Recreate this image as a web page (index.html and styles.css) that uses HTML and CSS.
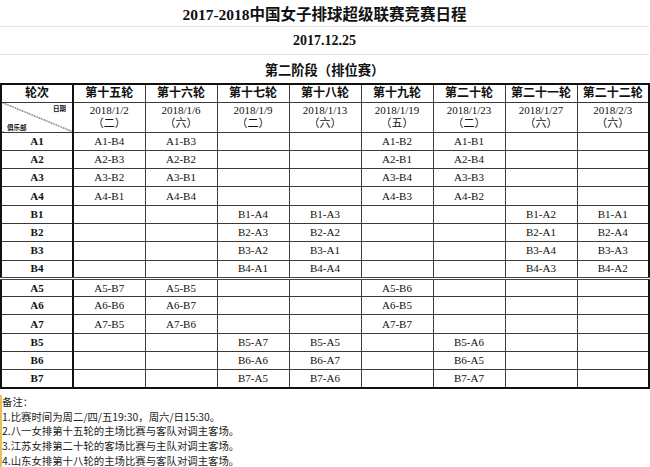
FILE: index.html
```html
<!DOCTYPE html>
<html lang="zh-CN">
<head>
<meta charset="utf-8">
<title>2017-2018中国女子排球超级联赛竞赛日程</title>
<link rel="stylesheet" href="styles.css">
</head>
<body>
<div class="page">
  <div class="band title">2017-2018中国女子排球超级联赛竞赛日程</div>
  <div class="band date">2017.12.25</div>
  <div class="band stage">第二阶段（排位赛）</div>
  <table class="sched">
    <colgroup>
      <col class="c0"><col class="c"><col class="c"><col class="c"><col class="c"><col class="c"><col class="c"><col class="c"><col class="c">
    </colgroup>
    <tr class="hrow">
      <th class="lab">轮次</th><th>第十五轮</th><th>第十六轮</th><th>第十七轮</th><th>第十八轮</th><th>第十九轮</th><th>第二十轮</th><th>第二十一轮</th><th>第二十二轮</th>
    </tr>
    <tr class="drow">
      <td class="lab diag"><div class="diagin"><span class="dt">日期</span><span class="db">俱乐部</span></div></td>
      <td>2018/1/2<br><span class="wd">（二）</span></td>
      <td>2018/1/6<br><span class="wd">（六）</span></td>
      <td>2018/1/9<br><span class="wd">（二）</span></td>
      <td>2018/1/13<br><span class="wd">（六）</span></td>
      <td>2018/1/19<br><span class="wd">（五）</span></td>
      <td>2018/1/23<br><span class="wd">（二）</span></td>
      <td>2018/1/27<br><span class="wd">（六）</span></td>
      <td>2018/2/3<br><span class="wd">（六）</span></td>
    </tr>
    <tr><td class="lab">A1</td><td>A1-B4</td><td>A1-B3</td><td></td><td></td><td>A1-B2</td><td>A1-B1</td><td></td><td></td></tr>
    <tr><td class="lab">A2</td><td>A2-B3</td><td>A2-B2</td><td></td><td></td><td>A2-B1</td><td>A2-B4</td><td></td><td></td></tr>
    <tr><td class="lab">A3</td><td>A3-B2</td><td>A3-B1</td><td></td><td></td><td>A3-B4</td><td>A3-B3</td><td></td><td></td></tr>
    <tr><td class="lab">A4</td><td>A4-B1</td><td>A4-B4</td><td></td><td></td><td>A4-B3</td><td>A4-B2</td><td></td><td></td></tr>
    <tr><td class="lab">B1</td><td></td><td></td><td>B1-A4</td><td>B1-A3</td><td></td><td></td><td>B1-A2</td><td>B1-A1</td></tr>
    <tr><td class="lab">B2</td><td></td><td></td><td>B2-A3</td><td>B2-A2</td><td></td><td></td><td>B2-A1</td><td>B2-A4</td></tr>
    <tr><td class="lab">B3</td><td></td><td></td><td>B3-A2</td><td>B3-A1</td><td></td><td></td><td>B3-A4</td><td>B3-A3</td></tr>
    <tr><td class="lab">B4</td><td></td><td></td><td>B4-A1</td><td>B4-A4</td><td></td><td></td><td>B4-A3</td><td>B4-A2</td></tr>
    <tr class="split"><td class="lab">A5</td><td>A5-B7</td><td>A5-B5</td><td></td><td></td><td>A5-B6</td><td></td><td></td><td></td></tr>
    <tr><td class="lab">A6</td><td>A6-B6</td><td>A6-B7</td><td></td><td></td><td>A6-B5</td><td></td><td></td><td></td></tr>
    <tr><td class="lab">A7</td><td>A7-B5</td><td>A7-B6</td><td></td><td></td><td>A7-B7</td><td></td><td></td><td></td></tr>
    <tr><td class="lab">B5</td><td></td><td></td><td>B5-A7</td><td>B5-A5</td><td></td><td>B5-A6</td><td></td><td></td></tr>
    <tr><td class="lab">B6</td><td></td><td></td><td>B6-A6</td><td>B6-A7</td><td></td><td>B6-A5</td><td></td><td></td></tr>
    <tr><td class="lab">B7</td><td></td><td></td><td>B7-A5</td><td>B7-A6</td><td></td><td>B7-A7</td><td></td><td></td></tr>
  </table>
  <div class="notes">
    <div>备注：</div>
    <div>1.比赛时间为周二/四/五19:30，周六/日15:30。</div>
    <div>2.八一女排第十五轮的主场比赛与客队对调主客场。</div>
    <div>3.江苏女排第二十轮的客场比赛与主队对调主客场。</div>
    <div>4.山东女排第十八轮的主场比赛与客队对调主客场。</div>
  </div>
</div>
</body>
</html>
```

FILE: styles.css
```css
html, body {
  margin: 0;
  padding: 0;
  background: #ffffff;
}
.page {
  width: 650px;
  height: 467px;
  overflow: hidden;
  font-family: "Liberation Serif", "Noto Sans CJK SC", serif;
  color: #111;
}
.band {
  display: flex;
  align-items: center;
  justify-content: center;
  font-weight: bold;
  border-bottom: 1px solid #e4e4e4;
  width: 649px;
  box-sizing: border-box;
}
.title {
  height: 27px;
  font-size: 15.5px;
}
.date {
  height: 28px;
  font-size: 14px;
}
.stage {
  height: 28px;
  font-size: 13.3px;
  border-bottom: none;
}
.sched {
  border-collapse: collapse;
  table-layout: fixed;
  width: 649px;
  border: 2px solid #111;
}
.c0 { width: 72px; }
.c { width: 72px; }
.sched th, .sched td {
  padding: 0;
  text-align: center;
  vertical-align: middle;
  border: 1px solid #3a3a3a;
  font-size: 11px;
  line-height: 13px;
  overflow: hidden;
  white-space: nowrap;
}
.sched th {
  font-weight: bold;
  font-size: 12px;
}
.sched .lab {
  border-right: 2px solid #111;
  font-weight: bold;
}
.sched tr { height: 18.3px; }
.sched .hrow { height: 18px; }
.sched .drow { height: 29.5px; }
.sched .drow td { line-height: 13.5px; }
.wd { font-size: 11px; }
.sched .split td { border-top: 3px double #444; }
.diag {
  background: linear-gradient(to top right, transparent calc(50% - 0.6px), #333 50%, transparent calc(50% + 0.6px));
}
.diagin {
  height: 29px;
  display: flex;
  flex-direction: column;
  justify-content: space-between;
  font-size: 6.5px;
  line-height: 8px;
  padding: 1px 6px 1px 5px;
  box-sizing: border-box;
  font-family: "Noto Sans CJK SC", sans-serif;
}
.dt { align-self: flex-end; }
.db { align-self: flex-start; }
.notes {
  margin-top: 6px;
  border-left: 2px solid #e2c25a;
  font-family: "Noto Sans CJK SC", sans-serif;
  font-size: 10.4px;
  line-height: 14.6px;
  color: #222;
  padding-left: 0;
}
```
